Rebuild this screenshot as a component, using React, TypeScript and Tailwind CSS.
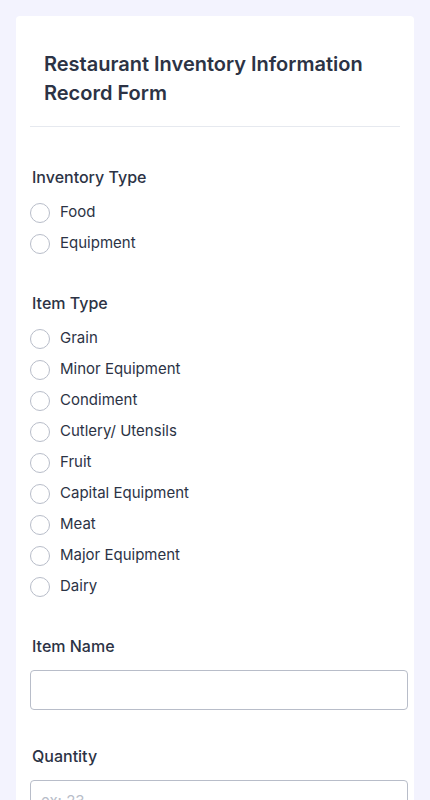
const inventoryTypes = ["Food", "Equipment"];
const itemTypes = [
  "Grain",
  "Minor Equipment",
  "Condiment",
  "Cutlery/ Utensils",
  "Fruit",
  "Capital Equipment",
  "Meat",
  "Major Equipment",
  "Dairy",
];

const RadioGroup = ({ label, name, options }: { label: string; name: string; options: string[] }) => (
  <div className="flex flex-col">
    <div className="text-[16px] leading-[24px] font-medium text-[#2c3345]">{label}</div>
    <div className="mt-[8px] flex flex-col">
      {options.map((opt) => (
        <label key={opt} className="flex items-center h-[31px] -ml-[2px] cursor-pointer">
          <input type="radio" name={name} className="peer sr-only" />
          <span className="w-[20px] h-[20px] rounded-full border border-[#b8bdc9] bg-white shrink-0" />
          <span className="ml-[10px] text-[15px] text-[#2c3345]">{opt}</span>
        </label>
      ))}
    </div>
  </div>
);

const TextInput = ({ label, placeholder }: { label: string; placeholder?: string }) => (
  <div className="flex flex-col">
    <div className="text-[16px] leading-[24px] font-medium text-[#2c3345]">{label}</div>
    <input
      type="text"
      placeholder={placeholder}
      className="mt-[12px] -ml-[2px] w-[378px] h-[40px] rounded-[4px] border border-[#b8bdc9] bg-white px-[10px] text-[15px] text-[#2c3345] placeholder:text-[#b8bdc9] outline-none"
    />
  </div>
);

export default function App() {
  return (
    <div
      className="min-h-screen bg-[#f3f3fe] pt-[16px] px-[16px]"
      style={{ fontFamily: "Inter, 'Noto Sans', sans-serif" }}
    >
      <div className="w-[398px] bg-white rounded-t-[4px] px-[16px] pb-[40px] min-h-[800px]">
        <div className="pt-[34px] pb-[18px] pl-[14px] pr-[10px] border-b border-[#e6e9ef] -mx-[2px] w-[370px]">
          <h1 className="text-[20px] leading-[29px] font-semibold text-[#2c3345]">
            Restaurant Inventory Information Record Form
          </h1>
        </div>
        <div className="mt-[38px]">
          <RadioGroup label="Inventory Type" name="inventory" options={inventoryTypes} />
        </div>
        <div className="mt-[32px]">
          <RadioGroup label="Item Type" name="item" options={itemTypes} />
        </div>
        <div className="mt-[32px]">
          <TextInput label="Item Name" />
        </div>
        <div className="mt-[34px]">
          <TextInput label="Quantity" placeholder="ex: 23" />
        </div>
      </div>
    </div>
  );
}
